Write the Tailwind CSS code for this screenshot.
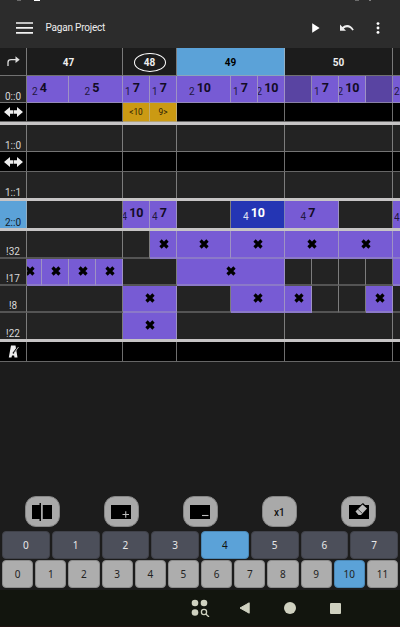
<!DOCTYPE html>
<html lang="en">
<head>
<meta charset="utf-8">
<title>Pagan Project</title>
<script src="https://cdn.jsdelivr.net/npm/@tailwindcss/browser@4"></script>
</head>
<body class="bg-[#1c1c1c]">
<div class="relative flex h-[627px] w-[400px] flex-col overflow-hidden bg-[#1c1c1c] font-[Roboto,sans-serif] text-[#eee]">
  <div class="absolute left-[34px] top-0 h-[1px] w-[6px] bg-white"></div>
  <div class="absolute left-[17px] top-0 h-[1px] w-[4px] bg-white/30"></div>
  <div class="absolute left-[355px] top-0 h-[1px] w-[4px] bg-white/30"></div>
  <div class="absolute left-[369px] top-0 h-[1px] w-[2px] bg-white/40"></div>
  <header class="flex h-12 shrink-0 items-center bg-[#2c2c2c] pt-[7px] pl-4">
    <svg width="17" height="12" viewBox="0 0 17 12" fill="none" stroke="#f2f2f2" stroke-width="1.7"><path d="M0 1h17M0 5.8h17M0 10.8h17"/></svg>
    <h1 class="ml-[12.5px] w-[263px] text-[10px] leading-4 font-normal tracking-[-0.2px]">Pagan Project</h1>
    <svg class="ml-[3px]" width="8" height="10" viewBox="0 0 8 10" fill="#fff"><path d="M.2 .2v9.6L7.600 5z"/></svg>
    <svg class="ml-[20px]" width="14" height="8" viewBox="0 0 14 8"><path d="M0 .6v6.200h6L3.800 4.600C6.500 2.400 10 2.800 12.300 6.400l1.500-.7C11.200 .4 5.800-.4 2.400 3z" fill="#eee"/></svg>
    <svg class="ml-[22px]" width="4" height="12" viewBox="0 0 4 12" fill="#fff"><circle cx="2" cy="1.600" r="1.450"/><circle cx="2" cy="6" r="1.450"/><circle cx="2" cy="10.400" r="1.450"/></svg>
  </header>
  <main id="grid" class="flex h-[314px] shrink-0 flex-col overflow-hidden"></main>
  <div class="grow"></div>
  <section class="mb-[4px] flex h-[32px] shrink-0 items-center justify-between pr-[24px] pl-[24.500px]">
    <button class="flex h-[31px] w-[35px] items-center justify-center rounded-[11px] border border-[#858585] bg-[#a9a9a9] pt-[1px]"><svg width="20" height="20" viewBox="0 0 20 20"><path d="M0 3h7.500V1H9v18H7.500v-2H0zM10.800 3H20v14h-9.200z" fill="#000"/></svg></button>
    <button class="flex h-[31px] w-[35px] items-center justify-center rounded-[11px] border border-[#858585] bg-[#a9a9a9] pt-[1px]"><svg width="20" height="20" viewBox="0 0 20 20"><path d="M0 3h20v14H0z"/><path d="M11.500 12.500h6.500M14.750 9.200v6.500" stroke="#bbb" stroke-width="1.100"/></svg></button>
    <button class="flex h-[31px] w-[35px] items-center justify-center rounded-[11px] border border-[#858585] bg-[#a9a9a9] pt-[1px]"><svg width="20" height="20" viewBox="0 0 20 20"><path d="M0 3h20v14H0z"/><path d="M12 13.500h6.500" stroke="#bbb" stroke-width="1.100"/></svg></button>
    <button class="flex h-[31px] w-[35px] items-center justify-center rounded-[11px] border border-[#858585] bg-[#a9a9a9] pt-[2px] text-[10px] font-medium text-[#111]">x1</button>
    <button class="flex h-[31px] w-[35px] items-center justify-center rounded-[11px] border border-[#858585] bg-[#a9a9a9] pt-[1px]"><svg width="20" height="20" viewBox="0 0 20 20"><path d="M0 3h11.500l2.500-2 2 2h4v14H0z"/><path d="M13.500 2.500l4.500 4-6 6.500H9.500L6.500 9.500z" fill="#bdbdbd"/><path d="M8.800 7.200l4.300 4" stroke="#222" stroke-width=".8"/></svg></button>
  </section>
  <section id="octaves" class="mb-[1px] flex h-[28px] shrink-0 gap-[2px] px-[2px]"></section>
  <section id="notes" class="flex h-[28px] shrink-0 gap-[2px] px-[2px]"></section>
  <nav class="mt-[2px] flex h-[37px] shrink-0 items-center border-b border-[#201412] bg-[#12150e] pl-[191px]">
    <svg width="19" height="18" viewBox="0 0 19 18" fill="#cfd1c0"><circle cx="4" cy="4" r="3.300"/><circle cx="13" cy="4" r="3.300"/><circle cx="4" cy="13.500" r="3.300"/><circle cx="13" cy="13" r="2.600" fill="none" stroke="#cfd1c0" stroke-width="1.300"/><path d="M14.800 14.900l3.200 3" stroke="#cfd1c0" stroke-width="1.400"/></svg>
    <svg class="ml-[29px]" width="12" height="12" viewBox="0 0 12 12" fill="#cfd1c0"><path d="M1 6L10.200 .8V11.200z" stroke="#cfd1c0" stroke-width="1" stroke-linejoin="round"/></svg>
    <span class="ml-[33px] size-[12px] rounded-full bg-[#cfd1c0]"></span>
    <span class="ml-[34px] size-[11px] rounded-[1px] bg-[#cfd1c0]"></span>
  </nav>
</div>
<script>
const BASE = 'flex shrink-0 items-center justify-center overflow-hidden border-r border-[#b8b8b8]/60 ';
const KIND = {
  empty: 'bg-[#232323]', black: 'bg-black', head: 'bg-[#1c1c1c]', blue: 'bg-[#5ba2d8] text-black',
  leaf: 'bg-[#775bd4] text-[#120b25]', dim: 'bg-[#5944a2]', navy: 'bg-[#2435b4] text-white', gold: 'bg-[#cb9a13] text-[#2b2005]'
};
const cross = '<svg class="mb-[1px] ml-[1px] shrink-0" width="10" height="10" viewBox="0 0 10 10"><path d="M1.500 1.500l7 7M8.500 1.500L1.500 8.500" stroke="#000" stroke-width="3.200"/></svg>';
const arrows = '<svg width="19" height="10" viewBox="0 0 19 10" fill="#eee"><path d="M0 5L6 0v3.200h3v3.600H6V10zM19 5l-6-5v3.200H9.600v3.600H13V10z"/></svg>';
const note = (o, n) => `<span class="flex shrink-0 items-baseline pr-[7px]"><span class="relative top-[3px] text-[10px] leading-none opacity-85">${o}</span><span class="mb-[2px] ml-[2px] text-[12.500px] leading-none font-bold">${n}</span></span>`;
const small = t => `<span class="text-[8.300px]">${t}</span>`;
const cell = (w, kind, html = '') => `<div class="${BASE}${KIND[kind]}" style="width:${w}px">${html}</div>`;
const edge = o => `<div class="flex w-[7px] shrink-0 items-center pl-[1px] ${KIND.leaf}"><span class="relative top-[3px] w-[6px] text-[10px] leading-none opacity-85">${o}</span></div>`;
const wide = kind => [cell(96, kind), cell(54, kind), cell(108, kind), cell(108, kind), cell(30, kind)].join('');
const label = (t, kind = 'empty') => `<div class="flex w-[27px] shrink-0 items-end justify-center border-r border-[#b8b8b8]/60 text-[10px] leading-[10px] ${kind === 'blue' ? 'text-[#10202c]' : 'text-[#d8d8d8]'} ${kind === 'blue' ? 'bg-[#5ba2d8]' : 'bg-[#232323]'}">${t}</div>`;
const icon = (svg, kind = 'black') => `<div class="flex w-[27px] shrink-0 items-center justify-center border-r border-[#b8b8b8]/60 ${KIND[kind]}">${svg}</div>`;
const row = (size, html) => `<div class="flex w-[423px] shrink-0 [&>*]:border-b-[#aaa]/60 ${size}">${html}</div>`;
const sep = '<div class="h-[3px] shrink-0 bg-[#c6c4c5]"></div>';
const LINE = ' [&>*]:border-b', PERC = ' [&>*]:border-b-2 [&>*]:border-b-[#b0b0b0]/35';
const num = t => `<span class="pt-[2px] text-[10px] font-bold">${t}</span>`;

document.getElementById('grid').innerHTML = [
  row('h-[28px]' + LINE, icon('<svg width="13" height="11" viewBox="0 0 13 11"><path d="M1 10V6.500Q1 3.600 4 3.600H10" fill="none" stroke="#ddd" stroke-width="1.300"/><path d="M8.500 .3L12.700 3.700 8.500 7z" fill="#ddd"/></svg>', 'head')
    + cell(96, 'head', `<span class="mr-[12px] flex">${num(47)}</span>`)
    + cell(54, 'head', '<span class="mt-[1px] flex h-[19px] w-[32px] items-center justify-center rounded-[50%] border-[1.500px] border-white text-[10px] font-bold">48</span>')
    + cell(108, 'blue', num(49)) + cell(108, 'head', num(50)) + cell(30, 'head')),
  row('h-[27px]' + LINE, label('0::0') + cell(42, 'leaf', `<span class="mr-[9px]">${note(2, 4)}</span>`) + cell(54, 'leaf', note(2, 5)) + cell(27, 'leaf', note(1, 7)) + cell(27, 'leaf', note(1, 7))
    + cell(54, 'leaf', note(2, 10)) + cell(27, 'leaf', note(1, 7)) + cell(27, 'leaf', note(2, 10)) + cell(27, 'dim') + cell(27, 'leaf', note(1, 7)) + cell(27, 'leaf', note(2, 10)) + cell(27, 'dim') + edge(2)),
  row('h-[19px]' + LINE, icon(arrows) + cell(96, 'black') + cell(27, 'gold', small('&lt;10')) + cell(27, 'gold', small('9&gt;')) + cell(108, 'black') + cell(108, 'black') + cell(30, 'black')),
  sep,
  row('h-[27px]' + LINE, label('1::0') + wide('empty')),
  row('h-[20px]' + LINE, icon(arrows) + wide('black')),
  row('h-[26px]', label('1::1') + wide('empty')),
  sep,
  row('h-[27px]', label('2::0', 'blue') + cell(96, 'empty') + cell(27, 'leaf', note(4, 10)) + cell(27, 'leaf', note(4, 7)) + cell(54, 'empty') + cell(54, 'navy', note(4, 10)) + cell(54, 'leaf', note(4, 7)) + cell(54, 'empty') + edge(4)),
  sep,
  row('h-[28px]' + PERC, label('!32') + cell(96, 'empty') + cell(27, 'empty') + cell(27, 'leaf', cross) + cell(54, 'leaf', cross) + cell(54, 'leaf', cross) + cell(54, 'leaf', cross) + cell(54, 'leaf', cross) + cell(54, 'leaf')),
  row('h-[27px]' + PERC, label('!17') + cell(15, 'leaf', `<span class="mr-[10px] shrink-0">${cross}</span>`) + cell(27, 'leaf', cross) + cell(27, 'leaf', cross) + cell(27, 'leaf', cross) + cell(54, 'empty') + cell(108, 'leaf', cross)
    + cell(27, 'empty') + cell(27, 'empty') + cell(27, 'empty') + cell(27, 'empty') + cell(54, 'leaf')),
  row('h-[27px]' + PERC, label('!8') + cell(96, 'empty') + cell(54, 'leaf', cross) + cell(54, 'empty') + cell(54, 'leaf', cross) + cell(27, 'leaf', cross) + cell(27, 'empty') + cell(27, 'empty') + cell(27, 'leaf', cross) + cell(30, 'empty')),
  row('h-[26px]', label('!22') + cell(96, 'empty') + cell(54, 'leaf', `<span class="pb-[2px]">${cross}</span>`) + cell(108, 'empty') + cell(108, 'empty') + cell(30, 'empty')),
  sep,
  row('h-[20px]' + LINE, icon('<svg width="11" height="13" viewBox="0 0 11 13"><path d="M3 .5h4.500L9.500 12.500h-3l-.4-2H4l-.5 2H.8z" fill="#eee"/><path d="M5 8.500L10 1.800" stroke="#000" stroke-width="1.400"/><path d="M5.800 8.300L10.500 2" stroke="#ddd" stroke-width=".8"/></svg>') + wide('black'))
].join('');

const KEY = 'flex flex-1 basis-0 items-center justify-center rounded-[4px] border pt-[1px] ';
document.getElementById('octaves').innerHTML = [0,1,2,3,4,5,6,7].map(n =>
  `<button class="${KEY}${n === 4 ? 'border-[#4a86b4] bg-[#5ba2d8] text-[#111]' : 'border-[#40424a] bg-[#4c4f5a] text-[#e8e8e8]'} font-['Noto_Sans',sans-serif] text-[10px]">${n}</button>`).join('');
document.getElementById('notes').innerHTML = [0,1,2,3,4,5,6,7,8,9,10,11].map(n =>
  `<button class="${KEY}${n === 10 ? 'border-[#4a86b4] bg-[#5ba2d8]' : 'border-[#8c8c8c] bg-[#adadad]'} font-['Noto_Sans',sans-serif] text-[10px] text-[#222]">${n}</button>`).join('');
</script>
</body>
</html>
